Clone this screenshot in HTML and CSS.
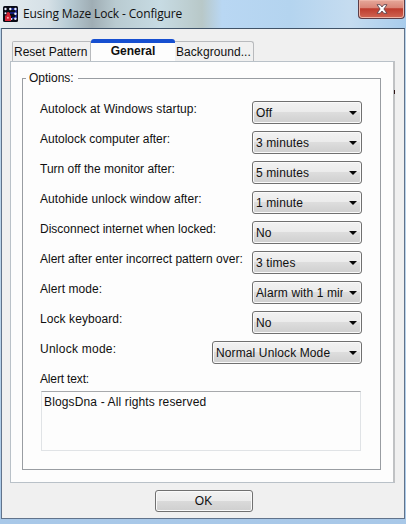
FILE: index.html
```html
<!DOCTYPE html>
<html lang="en">
<head>
<meta charset="utf-8">
<title>Eusing Maze Lock - Configure</title>
<link rel="stylesheet" href="styles.css">
</head>
<body>
<div class="window">
  <header class="titlebar">
    <svg class="app-icon" width="15" height="16" viewBox="0 0 15 16">
      <rect width="15" height="16" rx="1.5" fill="#090b16"/>
      <path d="M7 3h6v9H9M7 7h5" fill="none" stroke="#1826a0" stroke-width="1.5"/>
      <g fill="#e8edff"><circle cx="2.5" cy="3" r="1.2"/><circle cx="7.3" cy="3" r="1.2"/><circle cx="12.4" cy="3" r="1.2"/><circle cx="2.5" cy="7.3" r="1"/><circle cx="12.4" cy="7.8" r="1.2"/><circle cx="12.4" cy="12.7" r="1.2"/><circle cx="8.5" cy="13" r="1"/></g>
      <path d="M2 9.5h1.5V7.3Q5 4.5 7 7.3v2.2h1V15H2z" fill="#d32132"/>
      <circle cx="4.9" cy="11.7" r="1" fill="#ffadb0"/>
    </svg>
    <h1 class="title">Eusing Maze Lock - Configure</h1>
    <button class="close" aria-label="Close">
      <svg width="12" height="10" viewBox="0 0 12 10"><path d="M1 .7h3.2L6 3 7.8.7H11L7.9 5 11 9.3H7.8L6 7 4.2 9.3H1L4.1 5z" fill="#fff" stroke="#5d4650" stroke-width=".9"/></svg>
    </button>
  </header>
  <main class="client">
    <nav class="tabs">
      <span class="tab tab-reset">Reset Pattern</span>
      <span class="tab active">General</span>
      <span class="tab tab-background">Background...</span>
    </nav>
    <section class="panel">
      <fieldset class="options">
        <legend><span class="legend-text">Options:</span></legend>
        <div class="row"><span class="label spaced">Autolock at Windows startup:</span><span class="select"><span class="value">Off</span></span></div>
        <div class="row"><span class="label">Autolock computer after:</span><span class="select"><span class="value">3 minutes</span></span></div>
        <div class="row"><span class="label">Turn off the monitor after:</span><span class="select"><span class="value">5 minutes</span></span></div>
        <div class="row"><span class="label spaced">Autohide unlock window after:</span><span class="select"><span class="value">1 minute</span></span></div>
        <div class="row"><span class="label">Disconnect internet when locked:</span><span class="select"><span class="value">No</span></span></div>
        <div class="row"><span class="label">Alert after enter incorrect pattern over:</span><span class="select"><span class="value">3 times</span></span></div>
        <div class="row"><span class="label spaced">Alert mode:</span><span class="select"><span class="value">Alarm with 1 minute</span></span></div>
        <div class="row"><span class="label spaced">Lock keyboard:</span><span class="select"><span class="value">No</span></span></div>
        <div class="row"><span class="label wide-spaced">Unlock mode:</span><span class="select wide"><span class="value">Normal Unlock Mode</span></span></div>
        <div class="row row-text"><span class="label tight">Alert text:</span></div>
        <div class="textbox">BlogsDna - All rights reserved</div>
      </fieldset>
    </section>
    <button class="ok">OK</button>
  </main>
</div>
</body>
</html>
```
FILE: styles.css
```css
* { box-sizing: border-box; }
body { margin: 0; width: 406px; height: 524px; overflow: hidden; font: 12px/15px "Liberation Sans", Arial, sans-serif; color: #101010; }
.window { height: 524px; padding: 0 1px; background: linear-gradient(#b9d3ea, #b9d3ea 60%, #a8c8e8); }
.titlebar { height: 28px; margin: 0 -1px; padding: 0 1px 0 3px; display: flex; align-items: flex-start; background: linear-gradient(90deg, #e4ecf0 0, #d5e0e6 48px, #b8ccd5 68px, #9fadb4 92px, #b9cbd1 116px, #c7dbe3 160px, #b8c8c8 202px, #b9d7f3 222px, #b4d4ef 290px, #c5dcf0 350px, #a8ccec 406px); }
.app-icon { margin-top: 6px; flex: none; }
.title { margin: 5px 0 0 5px; font: 12px/17px "Open Sans", "Noto Sans", sans-serif; letter-spacing: -.14px; white-space: nowrap; }
.close { margin-left: auto; width: 47px; height: 19px; padding: 0; border: 1px solid #5a3d48; border-top: 0; border-radius: 0 0 4px 4px; box-shadow: inset 0 0 0 1px #eeb5a8; background: linear-gradient(#e5a89a 0, #d98375 45%, #bd3b2d 48%, #d06654 100%); display: flex; align-items: center; justify-content: center; }
.client { height: 491px; border: 1px solid #61738b; border-top-color: #405368; background: #f0f0f0; padding: 10px 9px 0 8px; display: flex; flex-direction: column; }
.tabs { display: flex; height: 22px; align-items: flex-end; padding-left: 2px; }
.tab { height: 20px; border: 1px solid #b8babd; border-bottom: 0; background: #f0f0f0; line-height: 20px; white-space: nowrap; }
.tab-reset { width: 79px; padding-left: 1px; border-radius: 2px 0 0 0; }
.tab.active { width: 84px; height: 23px; margin-bottom: -1px; position: relative; background: #fdfdfd; border: 0; border-top: 4px solid #164fd0; border-radius: 3px 3px 0 0; text-align: center; font-weight: bold; line-height: 16px; }
.tab-background { width: 79px; padding-left: 1px; border-left: 0; border-radius: 0 3px 0 0; letter-spacing: .06px; }
.panel { position: relative; height: 422px; border: 1px solid #b9c1c8; border-right: 2px solid #c0c2c4; background: #fdfdfd; padding: 9px 12px 0 11px; }
.panel::after { content: ""; position: absolute; right: -2px; top: 28px; width: 1px; height: 4px; background: #301818; }
.options { margin: 0; padding: 15px 18px 0 17px; height: 399px; min-width: 0; border: 1px solid #999da2; }
legend { margin-left: -14px; padding: 0 4px 0 3px; height: 15px; }
.legend-text { display: block; }
.row { height: 30px; display: flex; justify-content: space-between; align-items: flex-start; }
.label { white-space: nowrap; padding-top: 1px; }
.spaced { letter-spacing: .08px; }
.wide-spaced { letter-spacing: .25px; }
.tight { letter-spacing: -.15px; }
.select { position: relative; width: 110px; height: 23px; border: 1px solid #707070; border-radius: 3px; box-shadow: inset 0 0 0 1px #fafafa; background: linear-gradient(#f2f2f2 0, #ebebeb 49%, #dddddd 50%, #cfcfcf 100%); padding: 3px 18px 0 3px; letter-spacing: .12px; }
.wide { width: 150px; }
.select::after { content: ""; position: absolute; right: 4px; top: 9px; border: 4px solid transparent; border-top-color: #080808; border-bottom: 0; }
.value { display: block; overflow: hidden; white-space: nowrap; line-height: 16px; }
.row-text { height: 20px; }
.textbox { margin: 0 1px; height: 60px; border: 1px solid #e0e3e6; border-top-color: #a7a9ac; padding: 3px 2px; letter-spacing: .14px; }
.ok { align-self: center; margin: 7px 0 0 2px; width: 98px; height: 22px; padding: 0; border: 1px solid #707070; border-radius: 3px; box-shadow: inset 0 0 0 1px #fafafa; background: linear-gradient(#f2f2f2 0, #ebebeb 49%, #dadada 50%, #cfcfcf 100%); font: inherit; color: inherit; }
```
